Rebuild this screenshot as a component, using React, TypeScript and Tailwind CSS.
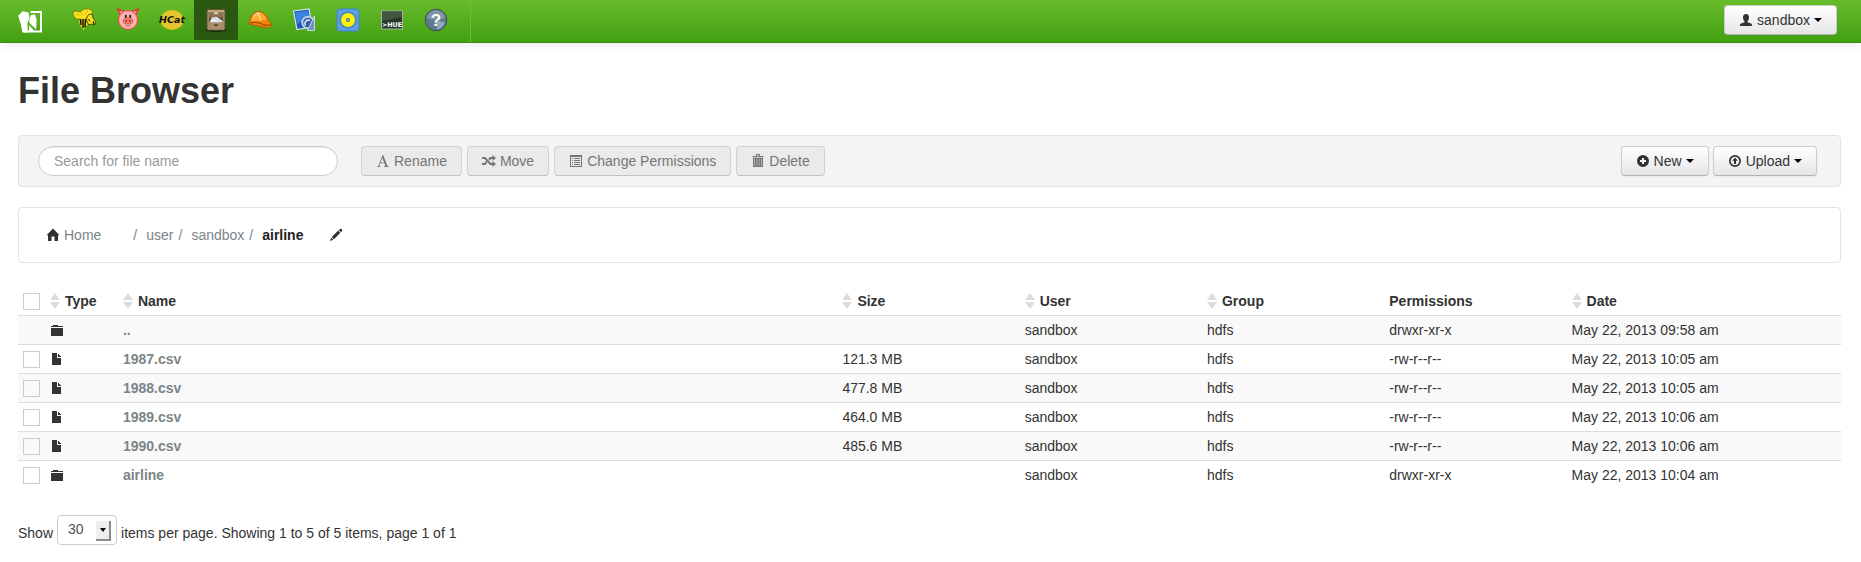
import React from "react";

const appIcon = "size-6 shrink-0";

function HueLogo() {
  return (
    <svg viewBox="0 0 24 24" className={appIcon} aria-hidden="true">
      <path d="M12.5 2.1H23V21.4H6" fill="none" stroke="#fff" strokeWidth="2" />
      <path d="M4.5 1.3 10.5 2.6 11.6 8 9.4 13 10 22.4H4.4L3 15 .2 5.8Z" fill="#fff" />
      <path d="M13 4.8 17 4.6 18.6 9.5 18.2 19.5 12 13.5 11 11.5Z" fill="#fff" />
      <path d="M11 15 16.5 21H11Z" fill="#fff" />
    </svg>
  );
}

function BeeIcon() {
  return (
    <svg viewBox="0 0 24 24" className={appIcon} aria-hidden="true">
      <path d="M.8 4 4 3 8 4 12 1.2 17 .8 20 2.5 20.5 6 17 9 12 10.5 5 11 2 9Z" fill="#f9e61c" stroke="#7c6b08" strokeWidth=".7" />
      <path d="M3 6 9 7.5M8 4 12 8M16 2 13 7" stroke="#b19d14" strokeWidth=".6" />
      <path d="M8 10.5 14 9 17 12 15.5 17 12.5 19.5 12 22.5 8.5 18 7 14Z" fill="#f3d31a" />
      <path d="M8.5 11 9 17M11 11 11 20M13.5 11 13 19" stroke="#171406" strokeWidth="1.5" />
      <path d="M14.5 10 16.5 6.5 20 6 21 10 23.6 13.5 22.5 16.8 19.5 16 17 17 15 14Z" fill="#f7e11b" stroke="#2d2706" strokeWidth=".8" />
      <path d="M16.5 11 18 13.5M21 13 22 16" stroke="#1a1704" strokeWidth="1" />
    </svg>
  );
}

function PigIcon() {
  return (
    <svg viewBox="0 0 24 24" className={appIcon} aria-hidden="true">
      <path d="M4.5 7 1.5 1 8 3.5ZM19.5 7 22.5 1 16 3.5Z" fill="#f59a94" stroke="#e5342d" strokeWidth="1.2" />
      <circle cx="12" cy="12" r="9.5" fill="#fcb4b1" stroke="#e8473f" strokeWidth="1" />
      <ellipse cx="9.8" cy="8.2" rx="1" ry="1.7" fill="#222" />
      <ellipse cx="14.2" cy="8.2" rx="1" ry="1.7" fill="#222" />
      <ellipse cx="12" cy="13" rx="4.6" ry="3" fill="#f88580" stroke="#d93831" strokeWidth=".9" />
      <ellipse cx="10.3" cy="13" rx=".8" ry="1.3" fill="#9f211c" />
      <ellipse cx="13.7" cy="13" rx=".8" ry="1.3" fill="#9f211c" />
      <path d="M9 17.5Q12 19 15 17.5" fill="none" stroke="#e05750" strokeWidth=".9" />
    </svg>
  );
}

function HCatIcon() {
  return (
    <svg viewBox="0 0 24 24" className={appIcon + " overflow-visible"} aria-hidden="true">
      <ellipse cx="12" cy="12" rx="11.5" ry="10" fill="#e6c42e" />
      <text x="12" y="15" textAnchor="middle" fontSize="9.5" fontWeight="700" fontStyle="italic" fontFamily="DejaVu Sans, sans-serif" fill="#111">HCat</text>
    </svg>
  );
}

function CabinetIcon() {
  return (
    <svg viewBox="0 0 24 24" className={appIcon} aria-hidden="true">
      <ellipse cx="12" cy="22" rx="11" ry="2" fill="#172e08" />
      <rect x="3" y="1.5" width="18" height="20.5" rx="1.5" fill="#a08864" stroke="#665236" strokeWidth=".8" />
      <path d="M3.8 3H20.2" stroke="#cdb994" strokeWidth="1.3" />
      <rect x="5" y="4.5" width="14" height="6" fill="#8b7351" />
      <rect x="10" y="4.5" width="4" height="1.6" fill="#e5dfd0" />
      <rect x="5" y="9.5" width="14" height="5" fill="#5d4b30" />
      <path d="M5.5 14.5 8 9.5 13 9 18.5 13V14.5Z" fill="#e7eef6" />
      <path d="M9 10 17 13.5" stroke="#9fb8cf" strokeWidth=".7" />
      <rect x="4" y="14.5" width="16" height="7" fill="#a88f69" />
      <rect x="10" y="16.3" width="4" height="1.7" fill="#594629" />
    </svg>
  );
}

function HelmetIcon() {
  return (
    <svg viewBox="0 0 24 24" className={appIcon} aria-hidden="true">
      <path d="M.8 16Q0 14 2 13 3 5 10 3.5 17 3 20 11L21.5 14Q25 16 23 18 21 20.5 17 19.5Z" fill="#f0850b" stroke="#b55905" strokeWidth=".9" />
      <path d="M3 13Q4 6 10 4.5 16 4 18.5 12Z" fill="#ffae35" />
      <path d="M9 5Q12 7 12.5 13M5.5 8.5Q8 4.5 12 5" fill="none" stroke="#ffe0a0" strokeWidth="1.1" />
      <path d="M2 15Q10 13 16 17 20 18 23 16.5" fill="none" stroke="#a94f03" strokeWidth="1.3" />
    </svg>
  );
}

function DesignerIcon() {
  return (
    <svg viewBox="0 0 24 24" className={appIcon} aria-hidden="true">
      <path d="M1.5 3 17 1 20 19 5 21.5Z" fill="#1c57b8" stroke="#d7e5f3" strokeWidth="1.2" />
      <path d="M3 4.5 15.8 2.8 17 9 5 16Z" fill="#3c83df" />
      <circle cx="16" cy="14.5" r="5.8" fill="#315da4" stroke="#b9cfe9" strokeWidth="2" />
      <path d="M13.5 17.5A3.5 3.5 0 0 1 18 12.5" fill="none" stroke="#dfeafa" strokeWidth="1.4" />
      <path d="M22.5 8V22.5H15.5Z" fill="#6d94ca" stroke="#dce9f7" strokeWidth=".8" />
    </svg>
  );
}

function TargetIcon() {
  return (
    <svg viewBox="0 0 24 24" className={appIcon} aria-hidden="true">
      <rect x="1" y="1" width="22" height="22" rx="2.5" fill="#5c9fe0" stroke="#3f86cd" />
      <circle cx="12" cy="12" r="8.5" fill="#4384c4" />
      <circle cx="12" cy="12" r="7" fill="#fff208" />
      <circle cx="12" cy="12" r="2" fill="#33699b" />
      <circle cx="12" cy="12" r=".8" fill="#fff" />
    </svg>
  );
}

function ShellIcon() {
  return (
    <svg viewBox="0 0 24 24" className={appIcon} aria-hidden="true">
      <rect x="1.5" y="3" width="21" height="18" fill="#27382a" stroke="#a9b5a2" strokeWidth="1" />
      <path d="M2 3.5H22V9L2 13Z" fill="#43543f" />
      <text x="12" y="18.5" textAnchor="middle" fontSize="6.5" fontWeight="700" fontFamily="DejaVu Sans, sans-serif" fill="#fff">&gt;HUE</text>
    </svg>
  );
}

function HelpIcon() {
  return (
    <svg viewBox="0 0 24 24" className={appIcon} aria-hidden="true">
      <circle cx="12" cy="12" r="10.8" fill="#60788a" stroke="#3c5260" strokeWidth="1" />
      <path d="M2.5 10A9.7 9.7 0 0 1 21.5 10Q12 14 2.5 10Z" fill="#8196a5" />
      <path d="M13 13 21 14Q19 20 13 21.5Z" fill="#91a9bb" />
      <text x="12" y="18" textAnchor="middle" fontSize="17" fontWeight="700" fontFamily="Liberation Sans, sans-serif" fill="#fff">?</text>
    </svg>
  );
}

const glyphs = {
  user: "M7 1C9 1 10 2.5 10 4.5 10 6.3 9.2 7.6 8.5 8.3V9.3L12 10.5C12.8 10.8 13 11.5 13 13H1C1 11.5 1.2 10.8 2 10.5L5.5 9.3V8.3C4.8 7.6 4 6.3 4 4.5 4 2.5 5 1 7 1Z",
  rename: "M7.2 1 11.2 11.5Q11.5 12.3 12.8 12.4V13H8V12.4Q9.5 12.3 9.2 11.5L8.4 9.2H4.2L3.4 11.4Q3.1 12.3 4.6 12.4V13H1.2V12.4Q2.2 12.3 2.6 11.3L6.6 1ZM6.3 3.8 4.5 8.4H8.1Z",
  move: "M0 3H3.3L9 9H10.5V7L14 10 10.5 13V11H8L2.5 5H0ZM0 9H2.3L4 7.2 5.4 8.6 3.3 11H0ZM6.2 5 8 3H10.5V1L14 4 10.5 7V5H9L7.6 6.5Z",
  list: "M1 1H13V13H1ZM2 3V12H12V3ZM3 4H4V5H3ZM5 4H11V5H5ZM3 6H4V7H3ZM5 6H11V7H5ZM3 8H4V9H3ZM5 8H11V9H5ZM3 10H4V11H3ZM5 10H11V11H5Z",
  trash: "M5 0H9V2H12.5V3.3H1.5V2H5ZM6 1V2H8V1ZM2 4H12V13H2ZM3.5 5V12H4V5ZM5.7 5V12H6.2V5ZM7.8 5V12H8.3V5ZM10 5V12H10.5V5Z",
  plus: "M7 1A6 6 0 1 1 7 13 6 6 0 1 1 7 1ZM6 4V6H4V8H6V10H8V8H10V6H8V4Z",
  upload: "M7 1A6 6 0 1 1 7 13 6 6 0 1 1 7 1ZM7 2.7A4.3 4.3 0 1 0 7 11.3 4.3 4.3 0 1 0 7 2.7ZM7 3.5 9.8 6.7H8V10H6V6.7H4.2Z",
  home: "M7 .5 13.5 7.2H12V13H8.5V8.5H5.5V13H2V7.2H.5Z",
  pencil: "M11.3 .7Q13.5 .5 13.3 2.7L12 4.2 9.8 2ZM9.2 2.6 11.4 4.8 5 11.2 2.8 9ZM2.2 9.6 4.4 11.8 1 13Z",
  folder: "M3 2H8V3H13V4H1V3H3ZM1 5H13V13H1Z",
  file: "M2 1H7V6H11V13H2ZM8 2H9V3H10V4H11V5H8Z",
};

function Glyph({ name }: { name: keyof typeof glyphs }) {
  return (
    <svg viewBox="0 0 14 14" className="size-3.5 shrink-0 fill-current" aria-hidden="true">
      <path fillRule="evenodd" d={glyphs[name]} />
    </svg>
  );
}

function Caret() {
  return (
    <svg viewBox="0 0 8 4" className="h-1 w-2 shrink-0 fill-black" aria-hidden="true">
      <path d="M0 0H8L4 4Z" />
    </svg>
  );
}

function SortIcon() {
  return (
    <svg viewBox="0 0 10 16" className="h-4 w-2.5 shrink-0 fill-[#dcdcdc]" aria-hidden="true">
      <path d="M0 7 5 0 10 7ZM0 9H10L5 16Z" />
    </svg>
  );
}

const buttonBase = "flex h-[30px] items-center gap-1 rounded border px-3.5 text-sm leading-5";

function MenuButton({ icon, label }: { icon: keyof typeof glyphs; label: string }) {
  return (
    <button
      type="button"
      aria-haspopup="menu"
      className={buttonBase + " border-[#ccc] border-b-[#b3b3b3] bg-linear-to-b from-white to-[#e6e6e6] shadow-[0_1px_2px_rgba(0,0,0,.05)]"}
    >
      <Glyph name={icon} />
      {label}
      <Caret />
    </button>
  );
}

function ActionButton({ icon, label }: { icon: keyof typeof glyphs; label: string }) {
  return (
    <button type="button" disabled className={buttonBase + " border-[#d2d2d2] border-b-[#c1c1c1] bg-[#eaeaea] text-[#757575]"}>
      <Glyph name={icon} />
      {label}
    </button>
  );
}

const apps = [
  { name: "Beeswax", Icon: BeeIcon },
  { name: "Pig", Icon: PigIcon },
  { name: "HCatalog", Icon: HCatIcon },
  { name: "File Browser", Icon: CabinetIcon, active: true },
  { name: "Job Browser", Icon: HelmetIcon },
  { name: "Job Designer", Icon: DesignerIcon },
  { name: "Oozie", Icon: TargetIcon },
  { name: "Shell", Icon: ShellIcon },
  { name: "Help", Icon: HelpIcon },
];

const columns = [
  { label: "Type", width: "w-[4%]", sortable: true },
  { label: "Name", width: "", sortable: true },
  { label: "Size", width: "w-[10%]", sortable: true },
  { label: "User", width: "w-[10%]", sortable: true },
  { label: "Group", width: "w-[10%]", sortable: true },
  { label: "Permissions", width: "w-[10%]", sortable: false },
  { label: "Date", width: "w-[15%]", sortable: true },
];

const files = [
  { name: "..", folder: true, size: "", mode: "drwxr-xr-x", date: "May 22, 2013 09:58 am" },
  { name: "1987.csv", folder: false, size: "121.3 MB", mode: "-rw-r--r--", date: "May 22, 2013 10:05 am" },
  { name: "1988.csv", folder: false, size: "477.8 MB", mode: "-rw-r--r--", date: "May 22, 2013 10:05 am" },
  { name: "1989.csv", folder: false, size: "464.0 MB", mode: "-rw-r--r--", date: "May 22, 2013 10:06 am" },
  { name: "1990.csv", folder: false, size: "485.6 MB", mode: "-rw-r--r--", date: "May 22, 2013 10:06 am" },
  { name: "airline", folder: true, size: "", mode: "drwxr-xr-x", date: "May 22, 2013 10:04 am" },
];

function RowCheckbox({ label }: { label: string }) {
  return (
    <input
      type="checkbox"
      aria-label={label}
      className="block size-[17px] appearance-none border border-[#ccc] checked:bg-[#338bb8]"
    />
  );
}

export default function App() {
  return (
    <div className="min-h-screen bg-white font-['Liberation_Sans',Arial,sans-serif] text-sm leading-5 text-[#333]">
      <header className="flex h-[43px] items-start border-b border-[#3a8f0e] bg-linear-to-b from-[#68bc2a] to-[#41a011] shadow-[0_1px_10px_rgba(0,0,0,.1)]">
        <nav className="flex h-full border-r border-[#6bbd35] pr-3" aria-label="Applications">
          <a href="#home" aria-label="Hue" className="flex h-10 w-[62px] items-center pt-1 pl-[18px]">
            <HueLogo />
          </a>
          {apps.map(({ name, Icon, active }) => (
            <a
              key={name}
              href="#app"
              aria-label={name}
              className={active ? "flex h-10 w-11 items-center justify-center bg-[#2b5810]" : "flex h-10 w-11 items-center justify-center"}
            >
              <Icon />
            </a>
          ))}
        </nav>
        <div className="ml-auto pt-[5px] pr-6">
          <MenuButton icon="user" label="sandbox" />
        </div>
      </header>

      <main className="pt-7 pr-5 pl-[18px]">
        <h1 className="text-4xl leading-10 font-bold">File Browser</h1>

        <div className="mt-6 flex items-center rounded border border-[#e3e3e3] bg-[#f4f4f4] py-2.5 pr-[23px] pl-[19px]">
          <input
            type="text"
            aria-label="Search for file name"
            placeholder="Search for file name"
            className="mr-[23px] h-[30px] w-[300px] rounded-full border border-[#ccc] bg-white px-[15px] shadow-[inset_0_1px_1px_rgba(0,0,0,.075)] placeholder:text-[#999]"
          />
          <div className="flex gap-[5px]">
            <ActionButton icon="rename" label="Rename" />
            <ActionButton icon="move" label="Move" />
            <ActionButton icon="list" label="Change Permissions" />
            <ActionButton icon="trash" label="Delete" />
          </div>
          <div className="ml-auto flex gap-1">
            <MenuButton icon="plus" label="New" />
            <MenuButton icon="upload" label="Upload" />
          </div>
        </div>

        <nav aria-label="Path" className="mt-5 flex h-14 items-center rounded border border-[#e3e3e3] px-[27px]">
          <a href="#home" className="mr-8 flex items-center gap-1 text-[#7b8588]">
            <span className="text-[#333]"><Glyph name="home" /></span>
            Home
          </a>
          <ol className="flex gap-[5px] text-[#7b8588]">
            <li>/<a href="#user" className="ml-[9px]">user</a></li>
            <li>/<a href="#sandbox" className="ml-[9px]">sandbox</a></li>
            <li>/<b className="ml-[9px] text-[#222]">airline</b></li>
          </ol>
          <button type="button" aria-label="Edit path" className="ml-[26px]">
            <Glyph name="pencil" />
          </button>
        </nav>

        <table className="mt-6 w-full table-fixed border-collapse text-left">
          <thead>
            <tr>
              <th className="w-7 py-1 pl-[5px]"><RowCheckbox label="Select all" /></th>
              {columns.map(({ label, width, sortable }) => (
                <th key={label} className={"px-1 py-1 " + width}>
                  <span className="flex items-center gap-[5px]">
                    {sortable && <SortIcon />}
                    {label}
                  </span>
                </th>
              ))}
            </tr>
          </thead>
          <tbody>
            {files.map((file) => (
              <tr key={file.name} className="border-t border-[#ddd] odd:bg-[#f9f9f9]">
                <td className="py-1 pl-[5px]">{file.name !== ".." && <RowCheckbox label={"Select " + file.name} />}</td>
                <td className="px-1 py-1"><Glyph name={file.folder ? "folder" : "file"} /></td>
                <td className="px-1 py-1"><a href="#file" className="font-bold text-[#7b8588]">{file.name}</a></td>
                <td className="px-1 py-1">{file.size}</td>
                <td className="px-1 py-1">sandbox</td>
                <td className="px-1 py-1">hdfs</td>
                <td className="px-1 py-1">{file.mode}</td>
                <td className="px-1 py-1">{file.date}</td>
              </tr>
            ))}
          </tbody>
        </table>

        <div className="mt-[26px] flex items-center gap-1">
          <label htmlFor="page-size" className="pt-1.5">Show</label>
          <span className="relative">
            <select id="page-size" defaultValue="30" className="block h-[30px] w-[60px] appearance-none rounded border border-[#ccc] bg-white pb-0.5 pl-2.5 text-[#555]">
              <option>30</option>
              <option>60</option>
              <option>100</option>
            </select>
            <span className="pointer-events-none absolute top-1.5 right-1.5 flex h-5 w-[15px] items-center justify-center border-r-2 border-b-2 border-[#8a8a8a] bg-[#eee]">
              <svg viewBox="0 0 6 4" className="h-1 w-1.5" aria-hidden="true"><path d="M0 0H6L3 4Z" /></svg>
            </span>
          </span>
          <span className="pt-1.5">items per page. Showing 1 to 5 of 5 items, page 1 of 1</span>
        </div>
      </main>
    </div>
  );
}
